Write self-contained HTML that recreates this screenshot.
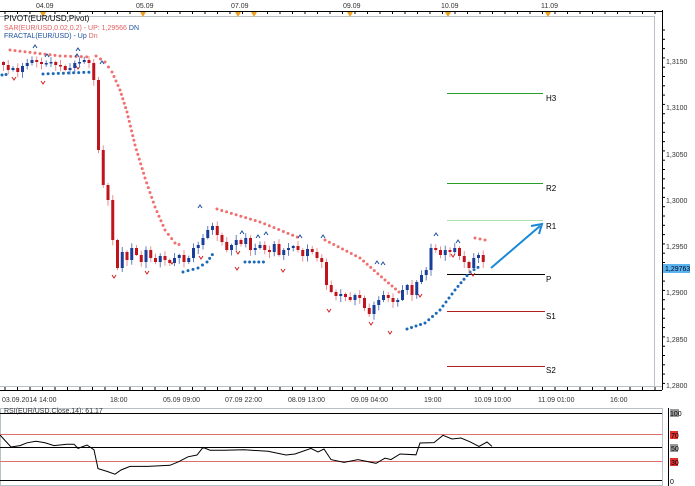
<!DOCTYPE html>
<html><head><meta charset="utf-8"><style>
html,body{margin:0;padding:0;background:#fff;width:695px;height:486px;overflow:hidden}
svg{display:block;font-family:"Liberation Sans",sans-serif}
</style></head><body>
<svg id="s" width="695" height="486" viewBox="0 0 695 486" xmlns="http://www.w3.org/2000/svg">
<rect x="0" y="0" width="695" height="486" fill="#fff"/>
<line x1="0" y1="11.5" x2="662" y2="11.5" stroke="#000"/>
<g id="ttop" stroke="#000"></g>
<line x1="654.5" y1="16" x2="654.5" y2="386" stroke="#b8c0c8"/>
<line x1="0" y1="16.5" x2="654" y2="16.5" stroke="#b8c0c8"/>
<line x1="662.5" y1="10" x2="662.5" y2="390" stroke="#000"/>
<g id="tright" stroke="#000"></g>
<line x1="0" y1="386.5" x2="662" y2="386.5" stroke="#b8c0c8"/>
<line x1="0" y1="390.5" x2="662" y2="390.5" stroke="#000"/>
<g id="tbot" stroke="#000"></g>
<g font-size="7" fill="#333">
<text x="36" y="8">04.09</text><text x="136" y="8">05.09</text><text x="231" y="8">07.09</text>
<text x="343" y="8">09.09</text><text x="441" y="8">10.09</text><text x="541" y="8">11.09</text>
</g>
<g fill="#f0a020">
<path d="M40 12h6l-3 5z"/><path d="M140 12h6l-3 5z"/><path d="M235 12h6l-3 5z"/><path d="M251 12h6l-3 5z"/>
<path d="M347 12h6l-3 5z"/><path d="M445 12h6l-3 5z"/><path d="M545 12h6l-3 5z"/>
</g>
<g font-size="7" fill="#333">
<text x="666" y="64">1,3150</text><text x="666" y="110">1,3100</text><text x="666" y="157">1,3050</text>
<text x="666" y="203">1,3000</text><text x="666" y="249">1,2950</text><text x="666" y="295">1,2900</text>
<text x="666" y="342">1,2850</text><text x="666" y="388">1,2800</text>
</g>
<rect x="663" y="264" width="27" height="9" fill="#5ab4ee"/>
<text x="665" y="271" font-size="7" fill="#002">1,29763</text>
<g font-size="7" fill="#333">
<text x="2" y="402">03.09.2014 14:00</text><text x="110" y="402">18:00</text><text x="163" y="402">05.09 09:00</text>
<text x="225" y="402">07.09 22:00</text><text x="288" y="402">08.09 13:00</text><text x="351" y="402">09.09 04:00</text>
<text x="424" y="402">19:00</text><text x="474" y="402">10.09 10:00</text><text x="538" y="402">11.09 01:00</text>
<text x="610" y="402">16:00</text>
</g>
<text x="4" y="21" font-size="8" fill="#000">PIVOT(EUR/USD,Pivot)</text>
<text x="4" y="30" font-size="7" fill="#e06060">SAR(EUR/USD,0.02,0.2) -  UP: 1,29566  <tspan fill="#1a4fa0">DN</tspan></text>
<text x="4" y="38" font-size="7" fill="#1a4fa0">FRACTAL(EUR/USD) -  Up  <tspan fill="#e06060">Dn</tspan></text>
<line x1="447" y1="93.5" x2="543" y2="93.5" stroke="#2aa02a"/>
<line x1="447" y1="183.5" x2="543" y2="183.5" stroke="#2aa02a"/>
<line x1="447" y1="220.5" x2="543" y2="220.5" stroke="#b0e0b0"/>
<line x1="447" y1="274.5" x2="545" y2="274.5" stroke="#000"/>
<line x1="447" y1="311.5" x2="545" y2="311.5" stroke="#b02020"/>
<line x1="447" y1="366.5" x2="545" y2="366.5" stroke="#b02020"/>
<g font-size="8" fill="#000">
<text x="546" y="101">H3</text><text x="546" y="191">R2</text><text x="546" y="229">R1</text>
<text x="546" y="282">P</text><text x="546" y="319">S1</text><text x="546" y="373">S2</text>
</g>
<line x1="491" y1="268" x2="540" y2="226" stroke="#1a88d8" stroke-width="2"/>
<path d="M531 226 L542 224 L539 234" fill="none" stroke="#1a88d8" stroke-width="2"/>
<g id="sar"></g>
<g id="cdl"></g>
<rect x="0.5" y="408.5" width="662" height="77" fill="none" stroke="#b8c0c8"/>
<text x="4" y="413" font-size="7" fill="#333">RSI(EUR/USD,Close,14): 61,17</text>
<line x1="0" y1="413.5" x2="662" y2="413.5" stroke="#000"/>
<line x1="0" y1="434.5" x2="662" y2="434.5" stroke="#e07070"/>
<line x1="0" y1="447.5" x2="662" y2="447.5" stroke="#000"/>
<line x1="0" y1="461.5" x2="662" y2="461.5" stroke="#e07070"/>
<line x1="0" y1="480.5" x2="662" y2="480.5" stroke="#000"/>
<line x1="668.5" y1="408" x2="668.5" y2="486" stroke="#000"/>
<rect x="670" y="409" width="9" height="8" fill="#999"/><text x="670" y="416" font-size="7">100</text>
<rect x="670" y="431" width="8" height="8" fill="#e03030"/><text x="671" y="438" font-size="7">70</text>
<rect x="670" y="444" width="8" height="8" fill="#999"/><text x="671" y="451" font-size="7">50</text>
<rect x="670" y="458" width="8" height="8" fill="#e03030"/><text x="671" y="465" font-size="7">30</text>
<text x="670" y="484" font-size="7">0</text>
<polyline fill="none" stroke="#000" stroke-width="1" points="0,435 11,447 20,445.6 27,442.8 36,441.3 45,442.8 54,445.6 67,444.2 74,444.2 78,448.4 87,445 94,449.8 98,468.6 107,471.4 115,474.2 121,470 130,466.4 148,466.4 170,465.3 179,461.6 188,456.8 197,455 203,447.4 210,450.2 224,450.2 244,449.8 268,451.2 286,455 295,454 311,448.4 318,452 324,449 331,459.6 344,462.4 358,459.6 376,463.3 385,458.2 391,459.6 400,454 416,454.8 420,443 434,442.6 443,435.3 452,439 461,438 470,441.8 479,446.4 487,442 492,446.4"/>
</svg>
<script>
(function(){
var NS="http://www.w3.org/2000/svg";
function el(p,t,a){var e=document.createElementNS(NS,t);for(var k in a)e.setAttribute(k,a[k]);document.getElementById(p).appendChild(e);return e;}
for(var tx=5;tx<660;tx+=12.5){el("ttop","line",{x1:tx,y1:11,x2:tx,y2:14});el("tbot","line",{x1:tx,y1:387,x2:tx,y2:390});}
for(var ty=30;ty<386;ty+=9.3){el("tright","line",{x1:662,y1:ty,x2:665,y2:ty});}
var c=[65,70,68,72,66,63,60,62,64,63,62,65,66,70,68,63,62,60,63,
80,150,185,200,240,268,252,260,248,255,262,250,258,262,256,260,263,258,255,262,258,248,245,238,230,226,235,242,250,245,240,244,238,250,248,245,250,252,244,255,250,248,246,250,256,249,252,258,262,285,292,296,294,297,300,295,298,308,314,305,300,295,298,302,300,290,285,295,282,275,270,248,250,255,250,252,248,256,262,268,258,255,262];
var prev=62;
for(var i=0;i<c.length;i++){var cx=2+i*4.75,o=prev,cl=c[i];var yt=Math.min(o,cl),yb=Math.max(o,cl);if(yb-yt<1.5)yb=yt+1.5;
var red=cl>o;var col=red?"#c0141c":"#1a3f9a";
var w1=yt-1-Math.abs(Math.sin(i*1.7))*4,w2=yb+1+Math.abs(Math.cos(i*2.3))*5;
el("cdl","line",{x1:cx+1.5,y1:w1,x2:cx+1.5,y2:w2,stroke:red?"#e89090":"#6080c0","stroke-width":1});
el("cdl","rect",{x:cx,y:yt,width:3,height:yb-yt,fill:col});prev=cl;}
function dots(pts,col){for(var j=0;j<pts.length-1;j++){var a=pts[j],b=pts[j+1];var n=Math.max(1,Math.round(Math.hypot(b[0]-a[0],b[1]-a[1])/5));for(var k=0;k<n;k++){el("sar","circle",{cx:a[0]+(b[0]-a[0])*k/n,cy:a[1]+(b[1]-a[1])*k/n,r:1.5,fill:col});}}}
var R="#f07070",B="#1a6ab8";
dots([[10,50],[60,56],[92,57]],R);
dots([[96,56],[105,62],[112,72],[120,90],[127,112],[135,145],[145,178],[155,207],[165,230],[175,243],[183,246]],R);
dots([[217,209],[260,222],[302,239]],R);
dots([[325,240],[360,258],[385,280],[406,298]],R);
dots([[475,238],[490,241]],R);
dots([[2,75],[10,74]],B);
dots([[43,74],[94,72]],B);
dots([[183,272],[198,268],[207,262],[215,251]],B);
dots([[245,262],[268,262]],B);
dots([[407,329],[425,323],[440,310],[455,290],[470,272],[482,265]],B);
var fu=[[35,46],[47,55],[77,55],[78,49],[102,62],[200,206],[258,236],[242,232],[266,233],[300,236],[323,236],[436,234],[458,241],[377,262],[383,263]];
var fd=[[14,78],[43,82],[78,67],[114,276],[147,272],[172,262],[201,257],[237,268],[238,252],[283,270],[329,310],[371,323],[390,332],[420,295],[453,255],[473,274]];
fu.forEach(function(p){el("sar","path",{d:"M"+(p[0]-2)+" "+(p[1]+2)+"L"+p[0]+" "+(p[1]-1)+"L"+(p[0]+2)+" "+(p[1]+2),fill:"none",stroke:"#1a4fa0","stroke-width":1});});
fd.forEach(function(p){el("sar","path",{d:"M"+(p[0]-2)+" "+(p[1]-1)+"L"+p[0]+" "+(p[1]+2)+"L"+(p[0]+2)+" "+(p[1]-1),fill:"none",stroke:"#d02020","stroke-width":1});});
})();
</script>
</body></html>
